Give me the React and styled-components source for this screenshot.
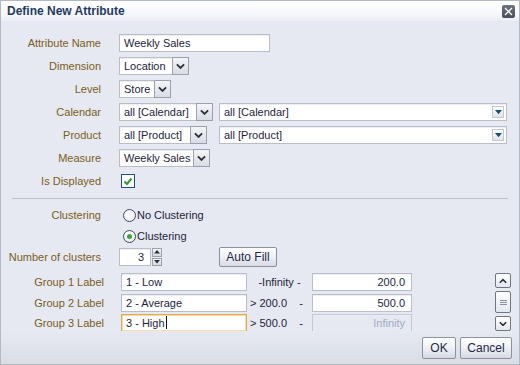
import React from 'react'
import styled, { createGlobalStyle } from 'styled-components'

const GlobalStyle = createGlobalStyle`
  html, body {
    margin: 0;
    padding: 0;
    background: #e6e9f1;
  }
  body {
    font-family: 'Liberation Sans', Arial, sans-serif;
    font-size: 11px;
  }
`

const Window = styled.div`
  width: 520px;
  height: 365px;
  box-sizing: border-box;
  border: 1px solid #b3b8c5;
  background: #e6e9f1;
  display: flex;
  flex-direction: column;
  overflow: hidden;
`

const TitleBar = styled.div`
  height: 20px;
  flex: none;
  display: flex;
  align-items: center;
  justify-content: space-between;
  padding: 0 4px 0 6px;
  background: linear-gradient(#ffffff, #f7f8fb 60%, #eceef4);
`

const Title = styled.span`
  font-weight: bold;
  font-size: 12px;
  color: #1f3c5f;
`

const CloseButton = styled.div`
  width: 13px;
  height: 13px;
  border-radius: 2px;
  background: linear-gradient(#6d7382, #474d5b);
  display: grid;
  place-items: center;
`

const Body = styled.div`
  flex: 1;
  padding-top: 13px;
  display: flex;
  flex-direction: column;
`

const Form = styled.div`
  display: grid;
  grid-template-columns: ${p => p.$label || 100}px 1fr;
  column-gap: ${p => p.$gap || 18}px;
  grid-auto-rows: ${p => p.$row || 23}px;
  align-items: start;
`

const Label = styled.div`
  text-align: right;
  color: #7a5d1b;
  line-height: 18px;
  white-space: nowrap;
`

const Field = styled.div`
  display: flex;
  align-items: center;
  gap: ${p => p.$gap || 6}px;
  height: 18px;
`

const TextBox = styled.div`
  box-sizing: border-box;
  width: ${p => p.$w}px;
  flex: none;
  height: 18px;
  background: ${p => (p.$disabled ? '#e6e9f1' : '#fff')};
  border: 1px solid ${p => (p.$focus ? '#e0aa4c' : p.$disabled ? '#c4c8d2' : '#b9bdc8')};
  box-shadow: ${p => (p.$focus ? 'inset 0 0 0 1px #f6dca8' : 'inset 0 1px 0 #eceef2')};
  color: ${p => (p.$disabled ? '#a4abc4' : '#1e1e3a')};
  padding: 0 ${p => (p.$right ? 6 : 4)}px;
  line-height: 16px;
  text-align: ${p => (p.$right ? 'right' : 'left')};
  white-space: nowrap;
  overflow: hidden;
`

const Caret = styled.span`
  display: inline-block;
  width: 1px;
  height: 13px;
  background: #111;
  vertical-align: -2px;
  margin-left: 1px;
`

const Choice = styled.div`
  display: flex;
  height: 18px;
  width: ${p => (p.$slot ? `${p.$slot}px` : 'auto')};
  flex: none;
`

const ChoiceText = styled(TextBox)`
  border-right: none;
  padding-left: 4px;
`

const ChoiceButton = styled.div`
  box-sizing: border-box;
  width: 17px;
  height: 18px;
  border: 1px solid #9aa0ad;
  background: linear-gradient(#f4f5f8, #d9dce4);
  display: grid;
  place-items: center;
`

const Combo = styled(TextBox)`
  position: relative;
  padding-right: 18px;
`

const ComboArrow = styled.div`
  position: absolute;
  right: 2px;
  top: 2px;
  width: 12px;
  height: 12px;
  box-sizing: border-box;
  border: 1px solid #c2c7d2;
  background: linear-gradient(#ffffff, #dfe3ea);
  display: grid;
  place-items: center;
`

const Check = styled.div`
  box-sizing: border-box;
  width: 14px;
  height: 14px;
  margin-left: 2px;
  border: 1px solid #1f4f7c;
  background: #fff;
  display: grid;
  place-items: center;
`

const Radio = styled.div`
  box-sizing: border-box;
  width: 13px;
  height: 13px;
  border-radius: 50%;
  border: 1px solid #3f4b5e;
  background: radial-gradient(circle at 40% 35%, #ffffff, #e3e6ed);
  display: grid;
  place-items: center;
  &::after {
    content: '';
    width: 5px;
    height: 5px;
    border-radius: 50%;
    background: ${p => (p.$on ? '#3aa53a' : 'transparent')};
  }
`

const RadioRow = styled.div`
  display: flex;
  align-items: center;
  gap: 1px;
  height: 18px;
  padding-left: 4px;
  color: #1e1e3a;
`

const Divider = styled.div`
  height: 1px;
  background: #bcc1cd;
  margin: 3px 11px 7px 11px;
`

const Spinner = styled.div`
  display: flex;
  gap: 1px;
  height: 18px;
`

const SpinButtons = styled.div`
  display: flex;
  flex-direction: column;
  gap: 1px;
`

const SpinButton = styled.div`
  box-sizing: border-box;
  width: 10px;
  height: 8.5px;
  border: 1px solid #9aa0ad;
  background: linear-gradient(#f4f5f8, #d6d9e1);
  display: grid;
  place-items: center;
`

const PushButton = styled.div`
  box-sizing: border-box;
  width: ${p => p.$w}px;
  height: ${p => p.$h || 20}px;
  border: 1px solid #8c919e;
  border-radius: 2px;
  background: linear-gradient(#ffffff, #eef0f4 50%, #d7dae3);
  color: #1e2a48;
  font-size: 12px;
  display: flex;
  align-items: center;
  justify-content: center;
`

const GroupArea = styled.div`
  height: 58px;
  display: flex;
  overflow: hidden;
  margin-top: 4px;
`

const GroupRows = styled.div`
  flex: 1;
`

const Range = styled.div`
  box-sizing: border-box;
  width: 59px;
  flex: none;
  color: #1e1e3a;
  white-space: nowrap;
  display: flex;
  justify-content: ${p => (p.$center ? 'center' : 'space-between')};
  padding-right: ${p => (p.$center ? 0 : 6)}px;
`

const ScrollBar = styled.div`
  width: 16px;
  margin: 0 8px 0 0;
  display: flex;
  flex-direction: column;
  gap: 3px;
`

const ScrollButton = styled.div`
  box-sizing: border-box;
  width: 16px;
  height: ${p => p.$h || 16}px;
  border: 1px solid #6f7583;
  border-radius: 2px;
  background: linear-gradient(#ffffff, #e4e7ee);
  display: grid;
  place-items: center;
`

const Footer = styled.div`
  height: 34px;
  flex: none;
  display: flex;
  justify-content: flex-end;
  align-items: flex-start;
  gap: 4px;
  padding: 6px 7px 0 0;
  background: linear-gradient(#e6e9f1, #d6dae4);
`

const Chevron = ({ up, size = 9, color = '#2a2f3a', w = 2 }) => (
  <svg width={size} height={size * 0.7} viewBox="0 0 10 7">
    <polyline
      points={up ? '1,6 5,2 9,6' : '1,1.5 5,5.5 9,1.5'}
      fill="none"
      stroke={color}
      strokeWidth={w}
    />
  </svg>
)

const Tri = ({ up, color = '#14506f', size = 7 }) => (
  <svg width={size} height={size * 0.6} viewBox="0 0 10 6">
    <polygon points={up ? '0,6 10,6 5,0' : '0,0 10,0 5,6'} fill={color} />
  </svg>
)

const Select = ({ value, w, slot }) => (
  <Choice $slot={slot}>
    <ChoiceText $w={w}>{value}</ChoiceText>
    <ChoiceButton>
      <Chevron />
    </ChoiceButton>
  </Choice>
)

const Wide = ({ value }) => (
  <Combo $w={288}>
    {value}
    <ComboArrow>
      <Tri />
    </ComboArrow>
  </Combo>
)

const groups = [
  { label: 'Group 1 Label', name: '1 - Low', from: '-Infinity -', to: '200.0' },
  { label: 'Group 2 Label', name: '2 - Average', from: '> 200.0', to: '500.0' },
  { label: 'Group 3 Label', name: '3 - High', from: '> 500.0', to: 'Infinity', focus: true, last: true },
]

const App = () => (
  <>
    <GlobalStyle />
    <Window>
      <TitleBar>
        <Title>Define New Attribute</Title>
        <CloseButton>
          <svg width="9" height="9" viewBox="0 0 9 9">
            <path d="M1 1L8 8M8 1L1 8" stroke="#fff" strokeWidth="1.3" />
          </svg>
        </CloseButton>
      </TitleBar>
      <Body>
        <Form>
          <Label>Attribute Name</Label>
          <Field>
            <TextBox $w={151}>Weekly Sales</TextBox>
          </Field>
          <Label>Dimension</Label>
          <Field>
            <Select value="Location" w={53} />
          </Field>
          <Label>Level</Label>
          <Field>
            <Select value="Store" w={35} />
          </Field>
          <Label>Calendar</Label>
          <Field>
            <Select value="all [Calendar]" w={77} slot={94} />
            <Wide value="all [Calendar]" />
          </Field>
          <Label>Product</Label>
          <Field>
            <Select value="all [Product]" w={71} slot={94} />
            <Wide value="all [Product]" />
          </Field>
          <Label>Measure</Label>
          <Field>
            <Select value="Weekly Sales" w={74} />
          </Field>
          <Label>Is Displayed</Label>
          <Field>
            <Check>
              <svg width="10" height="9" viewBox="0 0 10 9">
                <polyline points="1.5,4.5 4,7 8.5,1.5" fill="none" stroke="#2f9a2f" strokeWidth="2" />
              </svg>
            </Check>
          </Field>
        </Form>
        <Divider />
        <Form $row={21}>
          <Label>Clustering</Label>
          <RadioRow>
            <Radio />
            No Clustering
          </RadioRow>
          <Label />
          <RadioRow>
            <Radio $on />
            Clustering
          </RadioRow>
          <Label>Number of clusters</Label>
          <Field $gap={57}>
            <Spinner>
              <TextBox $w={32} $right>3</TextBox>
              <SpinButtons>
                <SpinButton>
                  <Tri up color="#2a2f3a" size={6} />
                </SpinButton>
                <SpinButton>
                  <Tri color="#2a2f3a" size={6} />
                </SpinButton>
              </SpinButtons>
            </Spinner>
            <PushButton $w={58}>Auto Fill</PushButton>
          </Field>
        </Form>
        <GroupArea>
          <GroupRows>
            <Form $label={103} $gap={17} $row={20.5}>
              {groups.map(g => (
                <React.Fragment key={g.label}>
                  <Label>{g.label}</Label>
                  <Field $gap={3}>
                    <TextBox $w={126} $focus={g.focus}>
                      {g.name}
                      {g.focus && <Caret />}
                    </TextBox>
                    {g.from.startsWith('>') ? (
                      <Range>
                        <span>{g.from}</span>
                        <span>-</span>
                      </Range>
                    ) : (
                      <Range $center>{g.from}</Range>
                    )}
                    <TextBox $w={100} $right $disabled={g.last}>
                      {g.to}
                    </TextBox>
                  </Field>
                </React.Fragment>
              ))}
            </Form>
          </GroupRows>
          <ScrollBar>
            <ScrollButton>
              <Chevron up size={8} />
            </ScrollButton>
            <ScrollButton $h={22}>
              <svg width="7" height="7" viewBox="0 0 7 7">
                <path d="M0 1.5H7M0 3.5H7M0 5.5H7" stroke="#8a909c" strokeWidth="1" />
              </svg>
            </ScrollButton>
            <ScrollButton>
              <Chevron size={8} />
            </ScrollButton>
          </ScrollBar>
        </GroupArea>
      </Body>
      <Footer>
        <PushButton $w={34} $h={22}>OK</PushButton>
        <PushButton $w={52} $h={22}>Cancel</PushButton>
      </Footer>
    </Window>
  </>
)

export default App
